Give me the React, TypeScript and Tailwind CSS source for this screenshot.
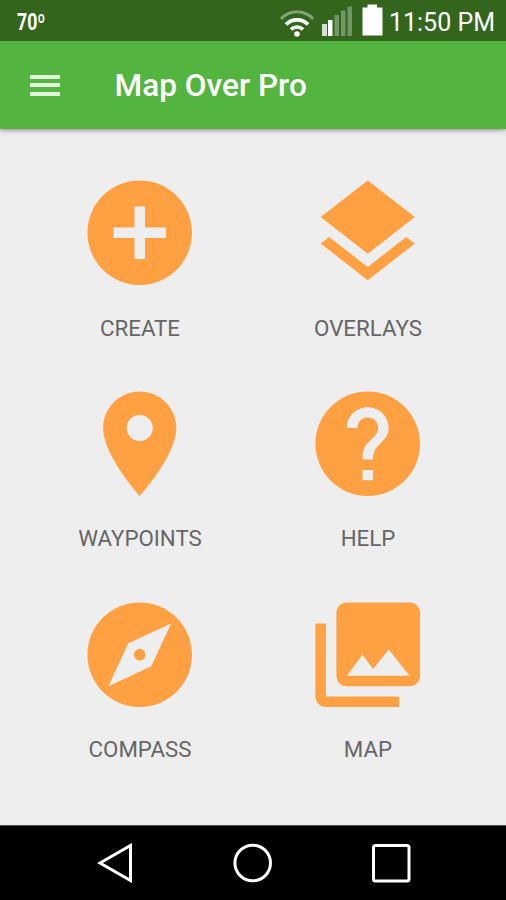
import React from "react";

const PATHS = {
  create:
    "M12 2C6.48 2 2 6.48 2 12s4.48 10 10 10 10-4.48 10-10S17.52 2 12 2zm5 11h-4v4h-2v-4H7v-2h4V7h2v4h4v2z",
  overlays:
    "M11.99 18.54l-7.37-5.73L3 14.07l9 7 9-7-1.63-1.27-7.38 5.74zM12 16l7.36-5.73L21 9l-9-7-9 7 1.63 1.27L12 16z",
  waypoints:
    "M12 2C8.13 2 5 5.13 5 9c0 5.25 7 13 7 13s7-7.75 7-13c0-3.87-3.13-7-7-7zm0 9.5c-1.38 0-2.5-1.12-2.5-2.5s1.12-2.5 2.5-2.5 2.5 1.12 2.5 2.5-1.12 2.5-2.5 2.5z",
  help:
    "M12 2C6.48 2 2 6.48 2 12s4.48 10 10 10 10-4.48 10-10S17.52 2 12 2zm1 17h-2v-2h2v2zm2.07-7.75l-.9.92C13.45 12.9 13 13.5 13 15h-2v-.5c0-1.1.45-2.1 1.17-2.83l1.24-1.26c.37-.36.59-.86.59-1.41 0-1.1-.9-2-2-2s-2 .9-2 2H8c0-2.21 1.79-4 4-4s4 1.79 4 4c0 .88-.36 1.68-.93 2.25z",
  compass:
    "M12 10.9c-.61 0-1.1.49-1.1 1.1s.49 1.1 1.1 1.1 1.1-.49 1.1-1.1-.49-1.1-1.1-1.1zM12 2C6.48 2 2 6.48 2 12s4.48 10 10 10 10-4.48 10-10S17.52 2 12 2zm2.19 12.19L6 18l3.81-8.19L18 6l-3.81 8.19z",
  map:
    "M22 16V4c0-1.1-.9-2-2-2H8c-1.1 0-2 .9-2 2v12c0 1.1.9 2 2 2h12c1.1 0 2-.9 2-2zm-11-4l2.03 2.71L16 11l4 5H8l3-4zM2 6v14c0 1.1.9 2 2 2h14v-2H4V6H2z",
};

const TILES: { label: string; icon: keyof typeof PATHS }[] = [
  { label: "CREATE", icon: "create" },
  { label: "OVERLAYS", icon: "overlays" },
  { label: "WAYPOINTS", icon: "waypoints" },
  { label: "HELP", icon: "help" },
  { label: "COMPASS", icon: "compass" },
  { label: "MAP", icon: "map" },
];

function StatusBar() {
  return (
    <div className="relative z-10 flex h-[41px] shrink-0 items-center bg-[#33651d] pr-[11px] pl-[17px] text-white">
      <span className="mt-[3px] origin-left scale-x-[0.77] text-[23px] leading-none font-bold">70º</span>
      <svg className="mt-[2px] ml-auto h-[30px] w-[36px]" viewBox="0 0 36 30" fill="none">
        <path d="M2 12a21.500 21.500 0 0 1 32 0" stroke="#84a376" strokeWidth="3" />
        <path d="M7 17.500a15.200 15.200 0 0 1 22 0" stroke="white" strokeWidth="3.800" />
        <path d="M12 22.500a8.500 8.500 0 0 1 12 0" stroke="white" strokeWidth="3.600" />
        <circle cx="18" cy="27" r="2.800" fill="white" />
      </svg>
      <svg className="mt-px ml-[7px] h-[30px] w-[30px]" viewBox="0 0 30 30">
        <path d="M0 18h5v12H0z" fill="#d5e0d1" />
        <path d="M6 14h4.500v16H6z" fill="white" />
        <path d="M12.500 9h4.500v21h-4.500zM19 4.500h4.500V30H19zM25.500 0.500H30V30h-4.500z" fill="#739666" />
      </svg>
      <svg className="-mt-px ml-[10px] h-[32px] w-[21px]" viewBox="0 0 21 32" fill="white">
        <path d="M5.500 0.500h9.500v3h5.500V31.500H0.500V3.500h5z" />
      </svg>
      <span className="mt-[3px] ml-[6px] text-[25px] leading-none whitespace-nowrap">11:50 PM</span>
    </div>
  );
}

function AppBar() {
  return (
    <header className="relative flex h-[88px] shrink-0 items-center bg-[#53b440] pl-[30px] shadow-[0_1px_5px_rgba(0,0,0,0.45)]">
      <button aria-label="Menu" className="flex w-[30px] flex-col gap-[4.500px]">
        <span className="h-[4px] bg-[#e2f5dc]" />
        <span className="h-[4px] bg-[#e2f5dc]" />
        <span className="h-[4px] bg-[#e2f5dc]" />
      </button>
      <h1 className="mt-px ml-[54.500px] text-[31.600px] leading-none font-medium text-white">Map Over Pro</h1>
    </header>
  );
}

function Tile({ label, icon }: { label: string; icon: keyof typeof PATHS }) {
  return (
    <button className="flex flex-col items-center">
      <svg className="size-[125.500px]" viewBox="0 0 24 24" fill="#ffa142">
        <path fillRule="evenodd" d={PATHS[icon]} />
      </svg>
      <span className="mt-[19px] text-[22.300px] leading-[26px] text-[#666666]">{label}</span>
    </button>
  );
}

function NavBar() {
  return (
    <nav className="flex h-[75px] shrink-0 items-center justify-center border-t border-[#454a45] bg-black">
      <svg className="h-[40px] w-[316px] translate-x-[2px]" viewBox="0 0 316 40" fill="none" stroke="white" strokeWidth="3">
        <path d="M3 20L33.500 2.500v35z" />
        <circle cx="155.700" cy="20" r="17.800" />
        <rect x="276.500" y="2.500" width="35.500" height="35.500" rx="2" />
      </svg>
    </nav>
  );
}

export default function App() {
  return (
    <div className="flex h-[900px] w-[506px] flex-col overflow-hidden bg-[#eeeeee] font-[Roboto,sans-serif]">
      <StatusBar />
      <AppBar />
      <main className="grid flex-1 auto-rows-[210.700px] grid-cols-[228px_228px] content-start pt-[41.200px] pl-[26px]">
        {TILES.map((tile) => (
          <Tile key={tile.label} {...tile} />
        ))}
      </main>
      <NavBar />
    </div>
  );
}
